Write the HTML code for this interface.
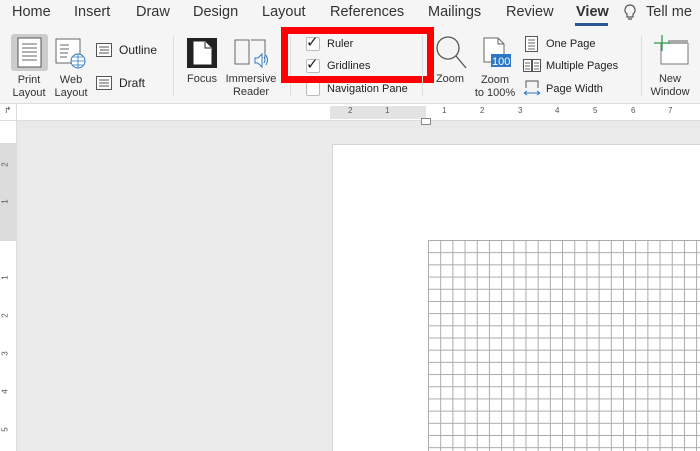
<!DOCTYPE html>
<html><head><style>
*{margin:0;padding:0;box-sizing:border-box}
body{width:700px;height:451px;overflow:hidden;background:#e9e9e9;font-family:"Liberation Sans",sans-serif;position:relative;color:#222}
.a{position:absolute;white-space:nowrap}
.tab{font-size:14.5px;top:4px;color:#333}
.lb{font-size:11px;color:#333;text-align:center;line-height:12.5px}
.cb{width:14px;height:14px;border:1px solid #bbb;background:#fff;border-radius:2px}
</style></head><body>
<div class="a" style="left:0;top:0;width:700px;height:105px;background:#f5f5f5"></div>
<div class="a tab" style="left:12px">Home</div>
<div class="a tab" style="left:74px">Insert</div>
<div class="a tab" style="left:136px">Draw</div>
<div class="a tab" style="left:193px">Design</div>
<div class="a tab" style="left:262px">Layout</div>
<div class="a tab" style="left:330px">References</div>
<div class="a tab" style="left:428px">Mailings</div>
<div class="a tab" style="left:506px">Review</div>
<div class="a tab" style="left:576px;font-weight:bold">View</div>
<div class="a" style="left:575px;top:23px;width:33px;height:3px;background:#2b579a"></div>
<svg class="a" style="left:623px;top:4px" width="14" height="18"><path d="M7 1a5 5 0 0 0-3 9v3h6v-3a5 5 0 0 0-3-9zM5 15h4" fill="none" stroke="#555" stroke-width="1.2"/></svg>
<div class="a tab" style="left:646px">Tell me</div>

<div class="a" style="left:11px;top:34px;width:37px;height:37px;background:#ccc;border-radius:3px"></div>
<svg class="a" style="left:17px;top:37px" width="26" height="32"><rect x="1" y="1" width="23" height="29" fill="#fff" stroke="#555"/><path d="M5 7h15M5 11h15M5 15h15M5 19h15M5 23h15" stroke="#666"/></svg>
<div class="a lb" style="left:6px;top:74px;width:46px">Print<br>Layout</div>
<svg class="a" style="left:55px;top:38px" width="32" height="32"><rect x="1" y="1" width="24" height="24" fill="#fff" stroke="#666"/><path d="M5 7h9M5 11h9M5 15h8M5 19h7" stroke="#666"/><circle cx="23" cy="23" r="7" fill="#fff" stroke="#2b78c5"/><path d="M16 23h14M23 16v14M18 19h10M18 27h10" stroke="#2b78c5" stroke-width=".8"/></svg>
<div class="a lb" style="left:50px;top:74px;width:42px">Web<br>Layout</div>
<svg class="a" style="left:96px;top:43px" width="16" height="14"><rect x=".5" y=".5" width="15" height="13" fill="#fff" stroke="#555"/><path d="M3 4h10M4 7h9M3 10h10" stroke="#555"/></svg>
<div class="a" style="left:119px;top:43px;font-size:12px">Outline</div>
<svg class="a" style="left:96px;top:76px" width="16" height="14"><rect x=".5" y=".5" width="15" height="13" fill="#fff" stroke="#555"/><path d="M3 4h10M3 7h10M3 10h10" stroke="#555"/></svg>
<div class="a" style="left:119px;top:76px;font-size:12px">Draft</div>
<div class="a" style="left:173px;top:36px;width:1px;height:60px;background:#ddd"></div>
<svg class="a" style="left:186px;top:37px" width="32" height="32"><rect x="1" y="1" width="30" height="30" fill="#222"/><path d="M8 5h11l6 6v16H8z" fill="#fff" stroke="#fff"/><path d="M19 5v6h6" fill="none" stroke="#222"/></svg>
<div class="a lb" style="left:184px;top:73px;width:36px">Focus</div>
<svg class="a" style="left:233px;top:38px" width="36" height="30"><path d="M2 2h14v24H2zM18 2h14v18" fill="none" stroke="#666"/><path d="M22 20h3l4-4v13l-4-4h-3z" fill="#fff" stroke="#2b78c5"/><path d="M31 19q2 3 0 6M33 17q3 5 0 10" fill="none" stroke="#2b78c5"/></svg>
<div class="a lb" style="left:223px;top:73px;width:56px">Immersive<br>Reader</div>
<div class="a" style="left:290px;top:36px;width:1px;height:60px;background:#ddd"></div>
<div class="a cb" style="left:306px;top:37px"></div>
<div class="a" style="left:306px;top:33px;font-size:15px">✓</div>
<div class="a" style="left:327px;top:38px;font-size:11px">Ruler</div>
<div class="a cb" style="left:306px;top:59px"></div>
<div class="a" style="left:306px;top:55px;font-size:15px">✓</div>
<div class="a" style="left:327px;top:60px;font-size:11px">Gridlines</div>
<div class="a cb" style="left:306px;top:82px"></div>
<div class="a" style="left:327px;top:83px;font-size:11px">Navigation Pane</div>
<div class="a" style="left:281px;top:27px;width:153px;height:56px;border:7px solid #f00"></div>
<div class="a" style="left:422px;top:36px;width:1px;height:60px;background:#ddd"></div>
<svg class="a" style="left:435px;top:35px" width="32" height="36"><circle cx="13" cy="13" r="11" fill="none" stroke="#555" stroke-width="1.3"/><path d="M21 21l10 12" stroke="#555" stroke-width="1.3"/></svg>
<div class="a lb" style="left:432px;top:73px;width:36px">Zoom</div>
<svg class="a" style="left:481px;top:37px" width="32" height="34"><path d="M3 1h14l6 6v18H3z" fill="#fff" stroke="#666"/><path d="M17 1v6h6" fill="none" stroke="#666"/><rect x="10" y="17" width="20" height="13" fill="#2b78c5"/><text x="11" y="28" font-size="11" fill="#fff" font-family="Liberation Sans">100</text></svg>
<div class="a lb" style="left:470px;top:74px;width:50px">Zoom<br>to 100%</div>
<svg class="a" style="left:525px;top:36px" width="14" height="16"><rect x=".5" y=".5" width="12" height="15" fill="#fff" stroke="#555"/><path d="M3 4h7M3 7h7M3 10h7M3 13h7" stroke="#666"/></svg>
<div class="a" style="left:546px;top:38px;font-size:11px">One Page</div>
<svg class="a" style="left:523px;top:59px" width="18" height="14"><rect x=".5" y=".5" width="8" height="12" fill="#fff" stroke="#555"/><rect x="9.5" y=".5" width="8" height="12" fill="#fff" stroke="#555"/><path d="M2 4h5M2 7h5M2 10h5M11 4h5M11 7h5M11 10h5" stroke="#666"/></svg>
<div class="a" style="left:546px;top:60px;font-size:11px">Multiple Pages</div>
<svg class="a" style="left:523px;top:80px" width="18" height="16"><path d="M3 8V1h12v7" fill="none" stroke="#555"/><path d="M1 13h16M1 13l3-2M1 13l3 2M17 13l-3-2M17 13l-3 2" stroke="#2b78c5"/></svg>
<div class="a" style="left:546px;top:83px;font-size:11px">Page Width</div>
<div class="a" style="left:641px;top:36px;width:1px;height:60px;background:#ddd"></div>
<svg class="a" style="left:653px;top:34px" width="36" height="32"><path d="M8 9v21h27V9" fill="#fff" stroke="#777"/><rect x="15" y="6" width="20" height="4" fill="#aaa"/><path d="M9 1v16M1 9h16" stroke="#2c9a4a" stroke-width="1.3"/></svg>
<div class="a lb" style="left:648px;top:73px;width:44px">New<br>Window</div>

<div class="a" style="left:0;top:103px;width:700px;height:1px;background:#ddd"></div>
<div class="a" style="left:0;top:104px;width:700px;height:17px;background:#fff;border-bottom:1px solid #ddd"></div>
<div class="a" style="left:16px;top:104px;width:1px;height:17px;background:#ddd"></div>
<div class="a" style="left:4px;top:105px;font-size:9px;color:#555">↱</div>
<div class="a" style="left:330px;top:106px;width:96px;height:13px;background:#e3e3e3"></div>
<div class="a" style="left:330px;top:106px;width:370px;height:13px;font-size:8px;color:#555">
<span class="a" style="left:18px;top:0">2</span><span class="a" style="left:55px;top:0">1</span>
<span class="a" style="left:112px;top:0">1</span><span class="a" style="left:150px;top:0">2</span><span class="a" style="left:188px;top:0">3</span><span class="a" style="left:225px;top:0">4</span><span class="a" style="left:263px;top:0">5</span><span class="a" style="left:301px;top:0">6</span><span class="a" style="left:338px;top:0">7</span></div>
<div class="a" style="left:421px;top:118px;width:10px;height:7px;border:1px solid #888;background:#fff"></div>

<div class="a" style="left:0;top:121px;width:17px;height:330px;background:#fff;border-right:1px solid #ddd"></div>
<div class="a" style="left:0;top:143px;width:16px;height:98px;background:#dcdcdc"></div>
<div class="a" style="left:3px;top:160px;font-size:8px;color:#555;transform:rotate(-90deg)">2</div>
<div class="a" style="left:3px;top:197px;font-size:8px;color:#555;transform:rotate(-90deg)">1</div>
<div class="a" style="left:3px;top:273px;font-size:8px;color:#555;transform:rotate(-90deg)">1</div>
<div class="a" style="left:3px;top:311px;font-size:8px;color:#555;transform:rotate(-90deg)">2</div>
<div class="a" style="left:3px;top:349px;font-size:8px;color:#555;transform:rotate(-90deg)">3</div>
<div class="a" style="left:3px;top:387px;font-size:8px;color:#555;transform:rotate(-90deg)">4</div>
<div class="a" style="left:3px;top:425px;font-size:8px;color:#555;transform:rotate(-90deg)">5</div>
<div class="a" style="left:21px;top:128px;width:679px;height:323px;background:#ebebeb"></div>
<div class="a" style="left:332px;top:144px;width:368px;height:307px;background:#fff;border-left:1px solid #d5d5d5;border-top:1px solid #d5d5d5"></div>
<div class="a" style="left:428px;top:240px;width:272px;height:211px;background-image:linear-gradient(90deg,#aaa 1px,transparent 1px),linear-gradient(#aaa 1px,transparent 1px);background-size:12.2px 12.2px"></div>
</body></html>
